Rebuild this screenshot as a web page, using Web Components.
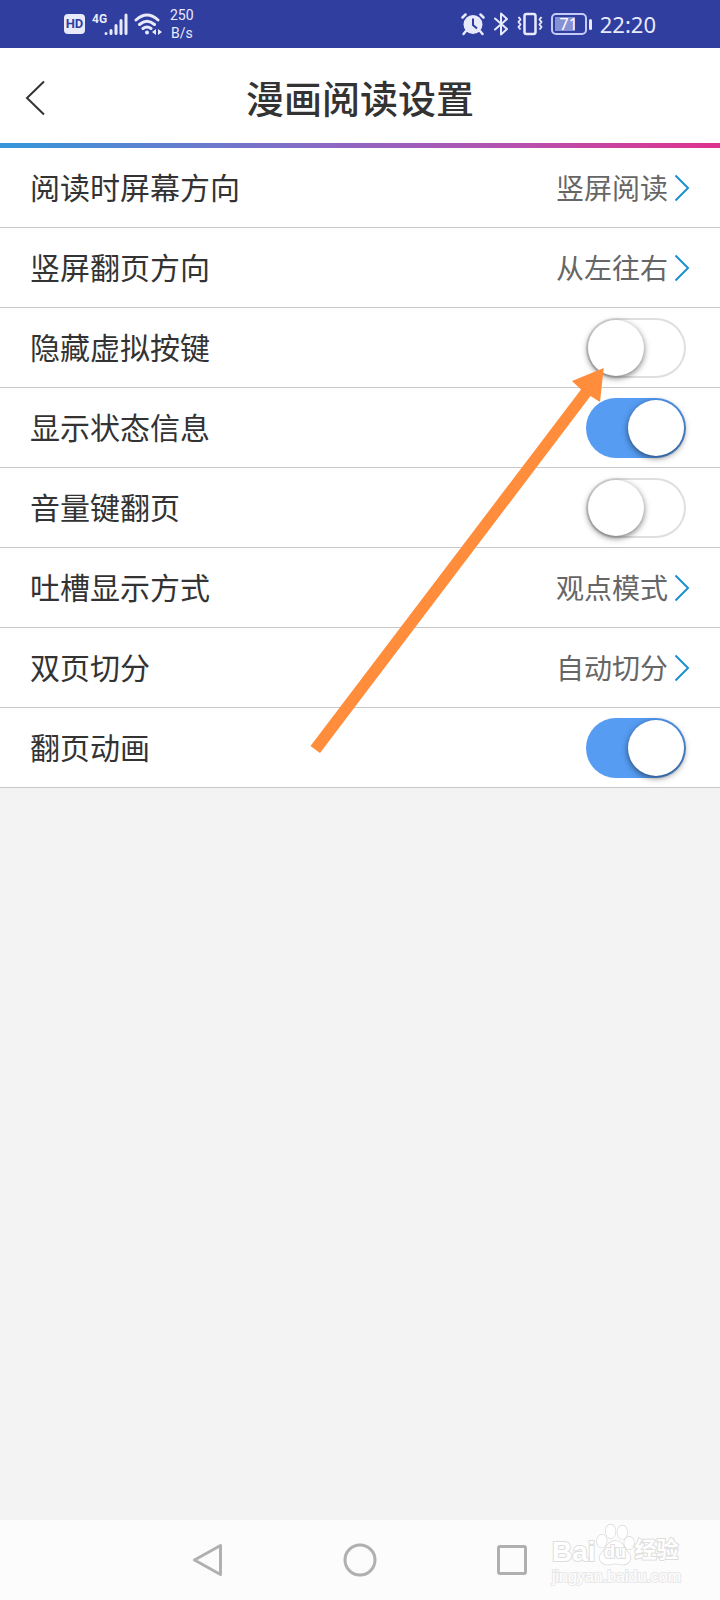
<!DOCTYPE html>
<html lang="zh-CN">
<head>
<meta charset="utf-8">
<meta name="viewport" content="width=device-width, initial-scale=1">
<title>漫画阅读设置</title>
<style>
html, body { margin: 0; }
body { background: #f3f3f3; color: #333; font-family: "Noto Sans", "Noto Sans CJK SC", sans-serif; }
</style>
</head>
<body>
<reader-app></reader-app>
<script>
const define = (name, html, setup) => {
  const template = document.createElement('template');
  template.innerHTML = html;
  customElements.define(name, class extends HTMLElement {
    constructor() {
      super();
      this.attachShadow({ mode: 'open' }).append(template.content.cloneNode(true));
    }
    connectedCallback() { if (setup) setup(this, this.shadowRoot); }
  });
};

define('status-bar', `
<style>
:host { display: flex; justify-content: space-between; align-items: center; height: 48px; padding: 0 64px; box-sizing: border-box; background: #303e9f; color: #e8eafc; }
.group { display: flex; align-items: center; }
svg { display: block; flex: none; }
.hd { width: 21px; height: 20px; border-radius: 4px; background: #e8eafc; color: #303e9f; font: bold 13px/20px Roboto, sans-serif; text-align: center; }
.net { align-self: flex-start; margin: 6px 0 0 7px; font: bold 12px/14px Roboto, sans-serif; width: 12px; }
.wifi { margin: 0 8px 0 6px; }
.speed { font: 14px/18px Roboto, sans-serif; text-align: center; }
.right { gap: 8px; }
.battery { display: flex; align-items: center; gap: 2px; }
.cell { box-sizing: border-box; width: 36px; height: 22px; border: 2px solid #c5cbf4; border-radius: 5px; padding: 2px; font: 16px/14px "Noto Sans", sans-serif; color: #fff; text-align: center; background: linear-gradient(#8690d4, #8690d4) 2px 2px / 20px 14px no-repeat; }
.tip { width: 3px; height: 11px; border-radius: 2px; background: #e8eafc; }
time { font: 22px/30px "Noto Sans", sans-serif; }
</style>
<div class="group">
  <span class="hd">HD</span><span class="net">4G</span>
  <svg width="24" height="24" viewBox="0 0 24 24" stroke="#e8eafc" stroke-width="3" stroke-linecap="round"><path d="M2 21.500v.1M7 18.500v3M12 13.500v8M17 8.500v13M22 3v18.500"/></svg>
  <svg class="wifi" width="28" height="24" viewBox="0 0 28 24" fill="none" stroke="#e8eafc" stroke-width="3" stroke-linecap="round"><path d="M2 8Q13-2 24 8M5.500 12.500Q13 6 20.500 12.500M9 16.500Q13 13.500 17 16.500"/><circle cx="13" cy="20.500" r="2" fill="#e8eafc" stroke="none"/><path d="M22 17v6l-4-3zM24 17v6l4-3z" fill="#e8eafc" stroke="none"/></svg>
  <div class="speed">250<br>B/s</div>
</div>
<div class="group right">
  <svg width="24" height="24" viewBox="0 0 24 24"><circle cx="12" cy="12.500" r="9.500" fill="#e8eafc"/><path d="M1.500 5.500 4.500 2.500M22.500 5.500 19.500 2.500M5 19l-2.500 3M19 19l2.500 3" stroke="#e8eafc" stroke-width="2.500" stroke-linecap="round"/><path d="M12 6.500V13l4 3.500" fill="none" stroke="#303e9f" stroke-width="2"/></svg>
  <svg width="16" height="24" viewBox="0 0 16 24" fill="none" stroke="#e8eafc" stroke-width="2" stroke-linejoin="round" stroke-linecap="round"><path d="M2 6.500 14 17l-6 5.500V1.500L14 7 2 17.500"/></svg>
  <svg width="26" height="24" viewBox="0 0 26 24" fill="none" stroke="#e8eafc" stroke-width="2" stroke-linejoin="round"><rect x="7.500" y="2" width="11" height="20" rx="2" stroke-width="2.500"/><path d="M1.500 5 3.500 7.500 1.500 10l2 2.500L1.500 15l2 2.500M24.500 5l-2 2.500 2 2.500-2 2.500 2 2.500-2 2.500"/></svg>
  <div class="battery"><span class="cell">71</span><span class="tip"></span></div>
  <time>22:20</time>
</div>`);

define('page-header', `
<style>
:host { display: block; background: #fff; }
header { display: grid; grid-template-columns: 72px 1fr 72px; align-items: center; height: 95px; padding-top: 4px; box-sizing: border-box; }
button { display: flex; align-items: center; height: 72px; padding: 0 0 0 25px; border: 0; background: none; }
svg { display: block; }
h1 { margin: 0; text-align: center; font-size: 38px; line-height: 56px; font-weight: 500; }
.rule { height: 5px; background: linear-gradient(90deg, #3498db, #8a68c4 45%, #b94fac 73%, #e0328f); }
</style>
<header>
  <button aria-label="返回"><svg width="20" height="36" viewBox="0 0 20 36" fill="none" stroke="#333" stroke-width="2"><path d="M19 1.500 2 18l17 16.500"/></svg></button>
  <h1><slot></slot></h1>
</header>
<div class="rule"></div>`);

const rowStyle = `
:host { display: block; background: #fff; border-bottom: 1px solid #c8c8c8; }
.row { display: flex; align-items: center; justify-content: space-between; width: 100%; height: 79px; box-sizing: border-box; padding: 0 30px; font-size: 30px; line-height: 44px; color: #333; }`;

define('choice-row', `
<style>${rowStyle}
button { border: 0; background: none; font-family: inherit; text-align: left; }
.value { display: flex; align-items: center; gap: 6px; font-size: 28px; line-height: 40px; color: #666; }
svg { display: block; }
</style>
<button class="row"><span><slot></slot></span><span class="value"><slot name="value"></slot><svg width="16" height="28" viewBox="0 0 16 28" fill="none" stroke="#1c8fd0" stroke-width="2"><path d="M1.500 1.500 14 14 1.500 26.500"/></svg></span></button>`);

define('switch-row', `
<style>${rowStyle}
.row { padding-right: 34px; }
input { appearance: none; position: relative; flex: none; width: 100px; height: 60px; margin: 0; border-radius: 30px; background: #fff; box-shadow: inset 0 0 0 2px #dfdfdf; }
input::before { content: ""; position: absolute; top: 2px; left: 2px; width: 56px; height: 56px; border-radius: 50%; background: #fff; box-shadow: 0 2px 6px rgba(0,0,0,.55); }
input:checked { background: #569cf3; box-shadow: none; }
input:checked::before { left: 42px; }
</style>
<label class="row"><span><slot></slot></span><input type="checkbox" role="switch"></label>`,
(host, root) => {
  root.querySelector('input').checked = host.hasAttribute('on');
});

define('settings-list', `
<style>
:host { display: block; position: relative; }
.pointer { position: absolute; top: 216px; right: 112px; pointer-events: none; }
</style>
<slot></slot>
<svg class="pointer" width="300" height="392" viewBox="0 0 300 392" aria-hidden="true"><path d="M295.700 4 264 17l9 8.500L2.500 382l9.500 7 270.500-357L292 38z" fill="#ff8d3b"/></svg>`);

define('baidu-mark', `
<style>
:host { display: block; width: 130px; color: #fff; font-family: "Liberation Sans", "Noto Sans CJK SC", sans-serif; -webkit-text-stroke: 2px #dedede; paint-order: stroke fill; }
.brand { display: flex; align-items: flex-end; height: 44px; font-weight: bold; }
.bai { font-size: 28px; line-height: 28px; }
.paw { display: grid; width: 39px; height: 44px; }
.paw > * { grid-area: 1 / 1; }
.du { align-self: end; text-align: center; font-size: 18px; line-height: 28px; }
.cn { font-size: 22px; line-height: 32px; }
.url { font-size: 16px; line-height: 22px; -webkit-text-stroke: 2px #e8e8e8; }
</style>
<div class="brand"><span class="bai">Bai</span><span class="paw"><svg width="39" height="44" viewBox="0 0 40 44" fill="#fff" stroke="#dadada" stroke-width="1.500"><ellipse cx="6" cy="19" rx="5" ry="6.500"/><ellipse cx="15" cy="9" rx="5" ry="7"/><ellipse cx="27" cy="10" rx="5" ry="7"/><ellipse cx="34" cy="21" rx="5" ry="6.500"/><path d="M20 19c8 0 9 8 13 12 6 7-1 13-7 12q-6-2-12 0C7 44 0 38 6 31c5-5 6-12 14-12z"/></svg><span class="du">du</span></span><span class="cn">经验</span></div>
<div class="url">jingyan.baidu.com</div>`);

define('nav-bar', `
<style>
:host { position: relative; display: grid; grid-template-columns: repeat(3, 152px); justify-content: center; align-items: center; height: 80px; background: #fcfcfc; }
button { display: flex; justify-content: center; border: 0; padding: 0; background: none; }
svg { display: block; }
baidu-mark { position: absolute; right: 38px; bottom: 12px; }
</style>
<button aria-label="返回"><svg width="34" height="34" viewBox="0 0 34 34" fill="none" stroke="#b0b0b0" stroke-width="3" stroke-linejoin="round"><path d="M29.500 2.500v29L3.500 17z"/></svg></button>
<button aria-label="主页"><svg width="34" height="34" viewBox="0 0 34 34" fill="none" stroke="#b0b0b0" stroke-width="3"><circle cx="17" cy="17" r="15"/></svg></button>
<button aria-label="最近任务"><svg width="34" height="34" viewBox="0 0 34 34" fill="none" stroke="#b0b0b0" stroke-width="3"><rect x="3.500" y="3.500" width="27" height="27" rx="1.500"/></svg></button>
<baidu-mark></baidu-mark>`);

define('reader-app', `
<style>
:host { display: flex; flex-direction: column; min-height: 100vh; }
main { flex: 1; }
</style>
<status-bar></status-bar>
<page-header>漫画阅读设置</page-header>
<main><settings-list>
  <choice-row>阅读时屏幕方向<span slot="value">竖屏阅读</span></choice-row>
  <choice-row>竖屏翻页方向<span slot="value">从左往右</span></choice-row>
  <switch-row>隐藏虚拟按键</switch-row>
  <switch-row on>显示状态信息</switch-row>
  <switch-row>音量键翻页</switch-row>
  <choice-row>吐槽显示方式<span slot="value">观点模式</span></choice-row>
  <choice-row>双页切分<span slot="value">自动切分</span></choice-row>
  <switch-row on>翻页动画</switch-row>
</settings-list></main>
<nav-bar></nav-bar>`);
</script>
</body>
</html>
